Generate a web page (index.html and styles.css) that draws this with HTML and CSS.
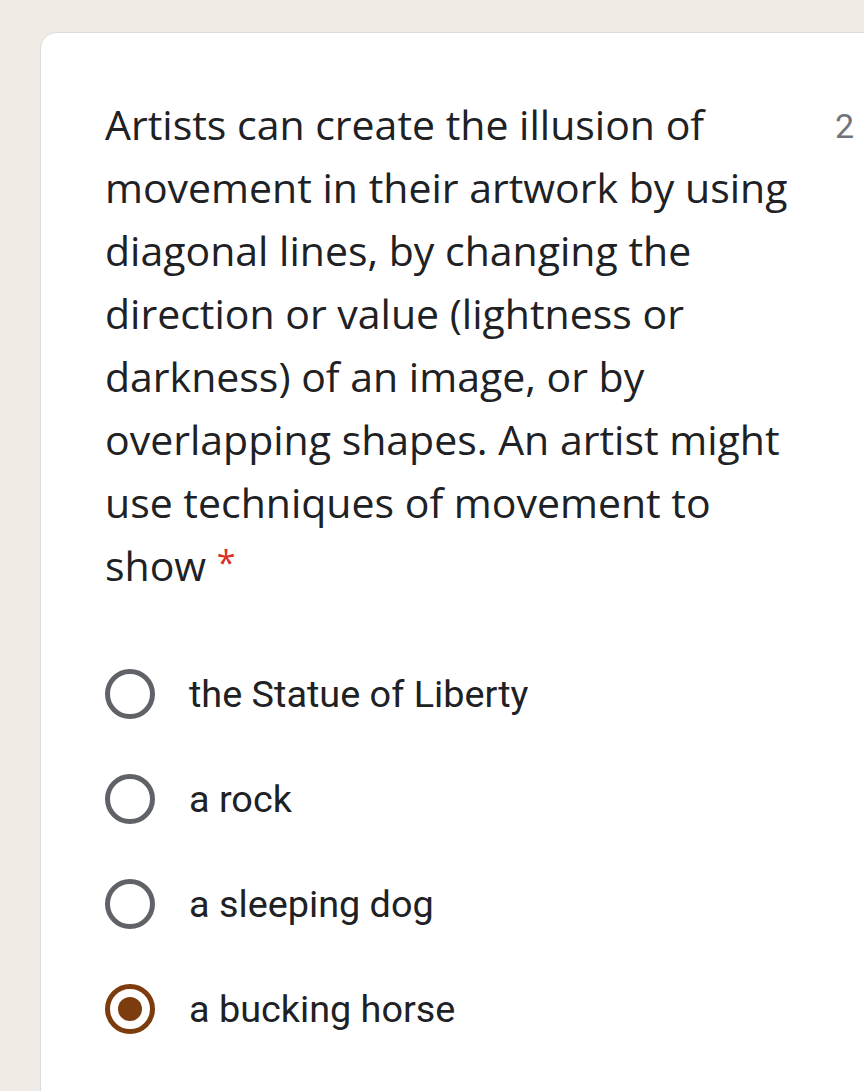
FILE: index.html
```html
<!DOCTYPE html>
<html lang="en">
<head>
<meta charset="utf-8">
<title>Question</title>
<link rel="stylesheet" href="styles.css">
</head>
<body>
<div class="card">
  <div class="header">
    <div class="question">Artists can create the illusion of movement in their artwork by using diagonal lines, by changing the direction or value (lightness or darkness) of an image, or by overlapping shapes. An artist might use techniques of movement to show <span class="req">*</span></div>
    <div class="points">2 points</div>
  </div>
  <div class="options">
    <label class="option"><span class="radio"></span><span class="label">the Statue of Liberty</span></label>
    <label class="option"><span class="radio"></span><span class="label">a rock</span></label>
    <label class="option"><span class="radio"></span><span class="label">a sleeping dog</span></label>
    <label class="option"><span class="radio checked"><span class="dot"></span></span><span class="label">a bucking horse</span></label>
  </div>
</div>
</body>
</html>
```
FILE: styles.css
```css
html, body {
  margin: 0;
  padding: 0;
  background: #f1ebe6;
  overflow: hidden;
}
body {
  height: 1091px;
}
.card {
  margin: 32px 0 0 40px;
  width: 960px;
  height: 1200px;
  box-sizing: border-box;
  background: #fff;
  border: 1px solid #dadce0;
  border-radius: 16px;
  padding: 60px 0 0 64px;
}
.header {
  display: flex;
  align-items: flex-start;
}
.question {
  flex: 0 0 700px;
  font-family: "Open Sans", sans-serif;
  font-size: 41px;
  line-height: 63px;
  color: #202124;
}
.req {
  color: #d93025;
  font-size: 34px;
  vertical-align: 6px;
  line-height: 1;
}
.points {
  margin-left: 30px;
  padding-top: 13px;
  font-family: Roboto, sans-serif;
  font-size: 34px;
  line-height: 40px;
  color: #70757a;
  white-space: nowrap;
}
.options {
  margin-top: 44px;
  display: flex;
  flex-direction: column;
}
.option {
  height: 105px;
  display: flex;
  align-items: center;
}
.radio {
  width: 50px;
  height: 50px;
  box-sizing: border-box;
  border: 5px solid #5f6368;
  border-radius: 50%;
  display: flex;
  align-items: center;
  justify-content: center;
  flex: none;
}
.radio.checked {
  border-color: #7d3c0e;
}
.dot {
  width: 24px;
  height: 24px;
  border-radius: 50%;
  background: #7d3c0e;
}
.label {
  margin-left: 34px;
  font-family: Roboto, sans-serif;
  font-size: 37.8px;
  color: #202124;
}
```
